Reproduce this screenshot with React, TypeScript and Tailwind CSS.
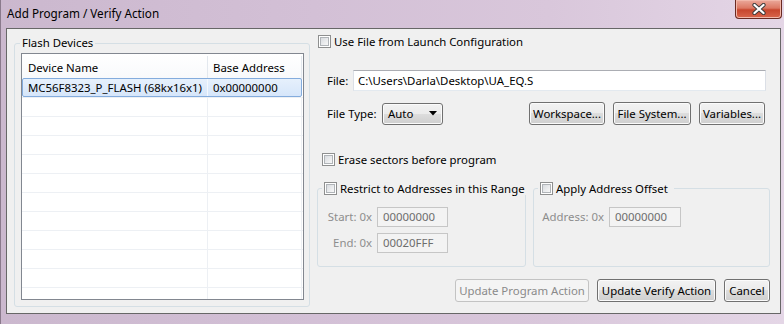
import React from "react"

const rows = Array.from({ length: 12 }, (_, i) => i)

function CheckBox() {
  return (
    <span className="inline-block w-[13px] h-[13px] shrink-0 border border-[#8e8f8f] bg-white p-[1px]">
      <span className="block w-full h-full border border-[#b0b4b8] bg-gradient-to-br from-[#d9dce0] to-[#f8f8f8]" />
    </span>
  )
}

function Btn({ w, children, disabled }: { w: string; children: React.ReactNode; disabled?: boolean }) {
  return (
    <div
      className={`${w} h-[23px] shrink-0 rounded-[3px] border flex items-center justify-center whitespace-nowrap ${
        disabled
          ? "border-[#c3c3c3] bg-[#f4f4f4] text-[#8a8a8a]"
          : "border-[#707070] bg-[linear-gradient(#f2f2f2,#ebebeb_50%,#dddddd_50%,#cfcfcf)] shadow-[inset_0_0_0_1px_#fbfbfb]"
      }`}
    >
      {children}
    </div>
  )
}

function DisabledInput({ w, value }: { w: string; value: string }) {
  return (
    <div className={`${w} h-[20px] border border-[#c6c6c6] bg-[#f3f3f3] text-[#6d6d6d] flex items-center pl-[5px]`}>
      {value}
    </div>
  )
}

export default function App() {
  return (
    <div className="w-[784px] h-[324px] overflow-hidden flex flex-col whitespace-nowrap bg-[linear-gradient(90deg,#cbb8ce,#d3c0d6_40%,#d9c7db_70%,#e4d6e6)] border-l border-[#8a7a8c] font-['Noto_Sans',sans-serif] text-[11.4px] leading-[16px] text-black">
      {/* Title bar */}
      <div className="relative h-[28px] shrink-0 flex items-center pl-[6px] pb-[2px] text-[11.7px]">
        <span>Add Program / Verify Action</span>
        <div className="absolute right-[2px] top-0 w-[47px] h-[19px] rounded-b-[4px] border border-t-0 border-[#6a2a22] bg-[linear-gradient(#eba99b,#dc7863_45%,#c7462d_55%,#d9664c)] shadow-[inset_0_0_0_1px_#f2b8aa] flex items-center justify-center">
          <svg width="14" height="12" viewBox="0 0 14 12">
            <path d="M2.5 2 L11.5 10 M11.5 2 L2.5 10" stroke="#3b3b3b" strokeWidth="4.2" strokeLinecap="round" />
            <path d="M2.5 2 L11.5 10 M11.5 2 L2.5 10" stroke="#ffffff" strokeWidth="2.3" strokeLinecap="round" />
          </svg>
        </div>
      </div>

      {/* Client area */}
      <div className="ml-[5px] mr-[3px] h-[286px] shrink-0 border border-[#676767] bg-[#f0f0f0] flex pl-[7px] pr-[5px] pb-[5px]">
        {/* Flash Devices group */}
        <div className="relative mt-[14px] w-[296px] h-[264px] shrink-0 border border-[#d5dfe5] rounded-[3px] pl-[6px] pt-[9px]">
          <span className="absolute left-[5px] -top-[9px] px-[2px] bg-[#f0f0f0]">Flash Devices</span>
          <div className="w-[283px] h-[247px] border border-[#828790] bg-white overflow-hidden">
            <div className="h-[25px] flex items-center pt-[2px] bg-[linear-gradient(#ffffff,#f8f9fb)]">
              <div className="w-[186px] h-full pl-[6px] flex items-center border-r border-[#e3e8ee]">Device Name</div>
              <div className="w-[94px] h-full pl-[5px] flex items-center border-r border-[#e3e8ee]">Base Address</div>
            </div>
            {rows.map((i) => (
              <div key={i} className="h-[19px] flex border-b border-[#edf0f4]">
                {i === 0 ? (
                  <div className="relative w-[280px] h-[19px] -mt-[1px] rounded-[2px] border border-[#84acdd] bg-[linear-gradient(#e6f0fc,#d6e6fa)] flex">
                    <div className="w-[185px] pl-[5px] flex items-center border-r border-[#f4f8fd]">MC56F8323_P_FLASH (68kx16x1)</div>
                    <div className="pl-[5px] flex items-center">0x00000000</div>
                  </div>
                ) : (
                  <>
                    <div className="w-[186px] border-r border-[#edf0f4]" />
                    <div className="w-[94px] border-r border-[#edf0f4]" />
                  </>
                )}
              </div>
            ))}
          </div>
        </div>

        {/* Right side */}
        <div className="ml-[7px] flex-1 flex flex-col">
          <div className="mt-[6px] h-[13px] flex items-center gap-[3px] pl-[1px]">
            <CheckBox />
            <span>Use File from Launch Configuration</span>
          </div>

          <div className="mt-[22px] h-[21px] flex items-center pl-[10px] pr-[9px]">
            <span className="w-[26px] shrink-0">File:</span>
            <div className="flex-1 h-[21px] border border-[#abadb3] border-x-[#dbdfe6] border-b-[#e3e9ef] bg-white flex items-center pl-[4px]">
              C:\Users\Darla\Desktop\UA_EQ.S
            </div>
          </div>

          <div className="mt-[11px] h-[23px] flex items-center pl-[10px] pr-[10px]">
            <span className="w-[55px] shrink-0">File Type:</span>
            <div className="w-[61px] h-[22px] rounded-[3px] border border-[#707070] bg-[linear-gradient(#f2f2f2,#ebebeb_50%,#dddddd_50%,#cfcfcf)] shadow-[inset_0_0_0_1px_#fbfbfb] flex items-center justify-between pl-[5px] pr-[5px]">
              <span>Auto</span>
              <svg width="8" height="5" viewBox="0 0 8 5">
                <path d="M0 0 H8 L4 4.5 Z" fill="#000" />
              </svg>
            </div>
            <div className="flex-1" />
            <div className="flex gap-[8px]">
              <Btn w="w-[76px]">Workspace...</Btn>
              <Btn w="w-[78px]">File System...</Btn>
              <Btn w="w-[66px]">Variables...</Btn>
            </div>
          </div>

          <div className="mt-[28px] h-[13px] flex items-center gap-[3px] pl-[5px]">
            <CheckBox />
            <span>Erase sectors before program</span>
          </div>

          <div className="mt-[22px] h-[79px] flex gap-[7px] pr-[5px]">
            <div className="relative w-[209px] shrink-0 h-full border border-[#d5dfe5] rounded-[3px] pt-[18px]">
              <div className="absolute left-[4px] -top-[7px] flex items-center gap-[3px] px-[2px] bg-[#f0f0f0] h-[13px]">
                <CheckBox />
                <span className="pr-[2px]">Restrict to Addresses in this Range</span>
              </div>
              <div className="flex flex-col gap-[6px]">
                <div className="flex items-center gap-[5px]">
                  <span className="w-[54px] text-right text-[#8d8d8d]">Start: 0x</span>
                  <DisabledInput w="w-[71px]" value="00000000" />
                </div>
                <div className="flex items-center gap-[5px]">
                  <span className="w-[54px] text-right text-[#8d8d8d]">End: 0x</span>
                  <DisabledInput w="w-[71px]" value="00020FFF" />
                </div>
              </div>
            </div>
            <div className="relative flex-1 h-full border border-[#d5dfe5] rounded-[3px] pt-[18px]">
              <div className="absolute left-[4px] -top-[7px] flex items-center gap-[3px] px-[2px] bg-[#f0f0f0] h-[13px]">
                <CheckBox />
                <span className="pr-[4px]">Apply Address Offset</span>
              </div>
              <div className="flex items-center gap-[5px]">
                <span className="w-[70px] text-right text-[#8d8d8d]">Address: 0x</span>
                <DisabledInput w="w-[72px]" value="00000000" />
              </div>
            </div>
          </div>

          <div className="mt-[12px] h-[23px] flex justify-end gap-[8px] pr-[5px]">
            <Btn w="w-[134px]" disabled>Update Program Action</Btn>
            <Btn w="w-[119px]">Update Verify Action</Btn>
            <Btn w="w-[46px]">Cancel</Btn>
          </div>
        </div>
      </div>
    </div>
  )
}
